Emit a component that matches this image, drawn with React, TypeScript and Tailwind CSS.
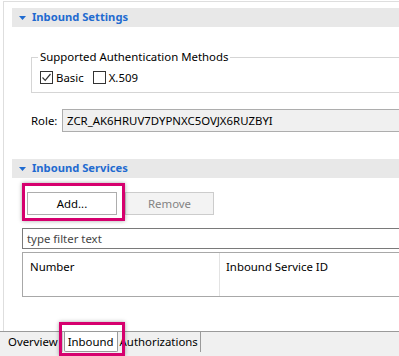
const font = "font-['Segoe_UI','Noto_Sans','Liberation_Sans',sans-serif]";

const SectionHeader = ({ title }: { title: string }) => (
  <div className="flex h-[19px] items-center bg-[#e8e8e8] pl-[7px]">
    <svg width="7" height="4" viewBox="0 0 7 4" className="mr-[6px]">
      <polygon points="0,0 7,0 3.5,4" fill="#1f6bd0" />
    </svg>
    <span className="text-[11.2px] font-bold text-[#1f6bd0]">{title}</span>
  </div>
);

const Checkbox = ({ checked, label }: { checked?: boolean; label: string }) => (
  <label className="flex items-center">
    <span className="flex h-[13px] w-[13px] items-center justify-center border border-[#333] bg-white">
      {checked && (
        <svg width="11" height="11" viewBox="0 0 11 11">
          <path d="M1.5 5.5 L4.2 8.3 L9.5 2" stroke="#333" strokeWidth="1.2" fill="none" />
        </svg>
      )}
    </span>
    <span className="ml-[3px] text-[11.4px] text-black">{label}</span>
  </label>
);

export default function App() {
  return (
    <div className={`relative flex h-[356px] w-[399px] flex-col overflow-hidden bg-white text-[11.4px] ${font}`}>
      <div className="ml-[3px] mt-[1px] flex flex-1 flex-col border-l border-t border-[#dedede] pl-[8px] pt-[6px]">
        <SectionHeader title="Inbound Settings" />

        <fieldset className="ml-[19px] mt-[22px] h-[44px] border border-r-0 border-[#d5d5d5] pl-[6px]">
          <legend className="px-[2px] leading-[16px] text-black">
            Supported Authentication Methods
          </legend>
          <div className="mt-[4px] flex items-center gap-[9px] pl-[2px]">
            <Checkbox checked label="Basic" />
            <Checkbox label="X.509" />
          </div>
        </fieldset>

        <div className="ml-[19px] mt-[16px] flex h-[23px] items-center">
          <span className="w-[31px] text-black">Role:</span>
          <div className="flex h-[23px] flex-1 items-center border border-r-0 border-[#adadad] bg-[#f0f0f0] pl-[4px] text-black">
            ZCR_AK6HRUV7DYPNXC5OVJX6RUZBYI
          </div>
        </div>

        <div className="mt-[27px]">
          <SectionHeader title="Inbound Services" />
        </div>

        <div className="ml-[15px] mt-[14px] flex gap-[8px]">
          <button className="flex h-[23px] w-[90px] items-center justify-center border border-[#adadad] bg-white text-black">
            Add...
          </button>
          <button className="flex h-[23px] w-[89px] items-center justify-center border border-[#cccccc] bg-[#f3f3f3] text-[#838383]">
            Remove
          </button>
        </div>

        <div className="ml-[10px] mt-[13px] flex h-[21px] items-center border border-r-0 border-[#7a7a7a] pl-[4px] text-[#444]">
          type filter text
        </div>

        <div className="ml-[10px] mt-[3px] flex h-[45px] border border-r-0 border-[#a8a8a8]">
          <div className="w-[197px] border-r border-[#e3e3e3] pl-[7px] pt-[5px] text-black">Number</div>
          <div className="flex-1 pl-[6px] pt-[5px] text-black">Inbound Service ID</div>
        </div>
        <div className="flex-1" />
      </div>

      <div className="flex h-[25px] items-start border-t border-[#9a9a9a] bg-[#f0f0f0] pl-[7px]">
        <div className="flex h-[20px] items-center border-r border-[#c8c8c8] pl-[1px] pr-[4px] text-black">
          Overview
        </div>
        <div className="ml-[1px] flex h-[20px] items-center rounded-b-[2px] border border-t-0 border-[#9a9a9a] bg-white px-[3px] text-black">
          Inbound
        </div>
        <div className="flex h-[20px] items-center border-r border-[#9a9a9a] px-[2px] text-black">
          Authorizations
        </div>
      </div>

      <div className="pointer-events-none absolute left-[22px] top-[183px] h-[38px] w-[103px] border-[3px] border-[#d6006e] shadow-[0_0_4px_rgba(0,0,0,0.35)]" />
      <div className="pointer-events-none absolute left-[59px] top-[322px] h-[34px] w-[66px] border-[3px] border-[#d6006e] shadow-[0_0_4px_rgba(0,0,0,0.35)]" />
    </div>
  );
}
